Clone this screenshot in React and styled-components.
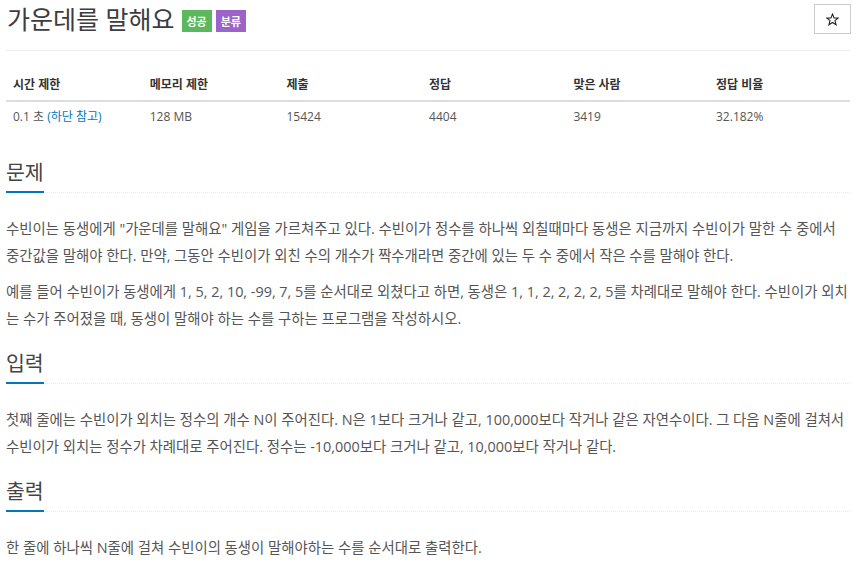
import React from "react";
import styled, { createGlobalStyle } from "styled-components";

const Global = createGlobalStyle`
  html, body { margin: 0; padding: 0; background: #fff; }
  body {
    font-family: "Open Sans", "Noto Sans CJK KR", sans-serif;
    color: #555;
  }
`;

const Page = styled.div`
  padding: 0 6px;
`;

const Header = styled.div`
  display: flex;
  align-items: center;
  justify-content: space-between;
  padding: 4px 0 16px;
  border-bottom: 1px solid #eee;
`;

const TitleWrap = styled.div`
  display: flex;
  align-items: center;
  gap: 4px;
  height: 30px;
`;

const Title = styled.h1`
  margin: 0 3px 0 1px;
  font-size: 25px;
  font-weight: 400;
  color: #3d3d3d;
  line-height: 30px;
`;

const Badge = styled.span`
  display: inline-flex;
  align-items: center;
  justify-content: center;
  height: 22px;
  padding: 0 5px;
  margin-top: 3px;
  background: ${(p) => p.$bg};
  color: #fff;
  font-size: 11px;
  font-weight: 700;
`;

const StarButton = styled.button`
  width: 37px;
  height: 30px;
  border: 1px solid #ccc;
  background: #fff;
  display: flex;
  align-items: center;
  justify-content: center;
  padding: 0;
  margin-right: -1px;
  color: #222;
`;

const Table = styled.table`
  width: 100%;
  border-collapse: collapse;
  margin-top: 19px;
  font-size: 12px;
`;

const Th = styled.th`
  text-align: left;
  font-weight: 700;
  color: #333;
  padding: 5px 7px;
  line-height: 20px;
  border-bottom: 2px solid #ddd;
  width: ${(p) => p.$w};
`;

const Td = styled.td`
  padding: 5px 7px;
  line-height: 20px;
  color: #555;
`;

const Link = styled.a`
  color: #0076c0;
  text-decoration: none;
`;

const Section = styled.section`
  margin-top: ${(p) => p.$mt};
`;

const Headline = styled.div`
  display: flex;
  border-bottom: 1px dotted #e4e9f0;
  margin-bottom: 22px;
`;

const H2 = styled.h2`
  margin: 0 0 -1px 0;
  font-size: 20.5px;
  font-weight: 400;
  color: #444;
  line-height: 26px;
  padding-bottom: 6px;
  border-bottom: 2px solid #0076c0;
`;

const P = styled.p`
  margin: 0 0 9px;
  font-size: 14.4px;
  line-height: 27px;
  color: #555;
`;

const cols = [
  ["시간 제한", "16.2%"],
  ["메모리 제한", "16.2%"],
  ["제출", "16.9%"],
  ["정답", "17.1%"],
  ["맞은 사람", "16.9%"],
  ["정답 비율", "16.7%"],
];

function StarIcon() {
  return (
    <svg width="13" height="13" viewBox="0 0 24 24" fill="none" stroke="currentColor" strokeWidth="2" strokeLinejoin="miter">
      <polygon points="12,2 14.9,9 22.5,9.3 16.6,14.2 18.6,21.7 12,17.5 5.4,21.7 7.4,14.2 1.5,9.3 9.1,9" />
    </svg>
  );
}

export default function App() {
  return (
    <Page>
      <Global />
      <Header>
        <TitleWrap>
          <Title>가운데를 말해요</Title>
          <Badge $bg="#5cb85c">성공</Badge>
          <Badge $bg="#9c64c8">분류</Badge>
        </TitleWrap>
        <StarButton aria-label="즐겨찾기"><StarIcon /></StarButton>
      </Header>
      <Table>
        <thead>
          <tr>
            {cols.map(([c, w]) => (
              <Th key={c} $w={w}>{c}</Th>
            ))}
          </tr>
        </thead>
        <tbody>
          <tr>
            <Td>0.1 초 <Link>(하단 참고)</Link></Td>
            <Td>128 MB</Td>
            <Td>15424</Td>
            <Td>4404</Td>
            <Td>3419</Td>
            <Td>32.182%</Td>
          </tr>
        </tbody>
      </Table>
      <Section $mt="27px">
        <Headline><H2>문제</H2></Headline>
        <P>수빈이는 동생에게 "가운데를 말해요" 게임을 가르쳐주고 있다. 수빈이가 정수를 하나씩 외칠때마다 동생은 지금까지 수빈이가 말한 수 중에서 중간값을 말해야 한다. 만약, 그동안 수빈이가 외친 수의 개수가 짝수개라면 중간에 있는 두 수 중에서 작은 수를 말해야 한다.</P>
        <P>예를 들어 수빈이가 동생에게 1, 5, 2, 10, -99, 7, 5를 순서대로 외쳤다고 하면, 동생은 1, 1, 2, 2, 2, 2, 5를 차례대로 말해야 한다. 수빈이가 외치는 수가 주어졌을 때, 동생이 말해야 하는 수를 구하는 프로그램을 작성하시오.</P>
      </Section>
      <Section $mt="18px">
        <Headline><H2>입력</H2></Headline>
        <P>첫째 줄에는 수빈이가 외치는 정수의 개수 N이 주어진다. N은 1보다 크거나 같고, 100,000보다 작거나 같은 자연수이다. 그 다음 N줄에 걸쳐서 수빈이가 외치는 정수가 차례대로 주어진다. 정수는 -10,000보다 크거나 같고, 10,000보다 작거나 같다.</P>
      </Section>
      <Section $mt="18px">
        <Headline><H2>출력</H2></Headline>
        <P>한 줄에 하나씩 N줄에 걸쳐 수빈이의 동생이 말해야하는 수를 순서대로 출력한다.</P>
      </Section>
    </Page>
  );
}
